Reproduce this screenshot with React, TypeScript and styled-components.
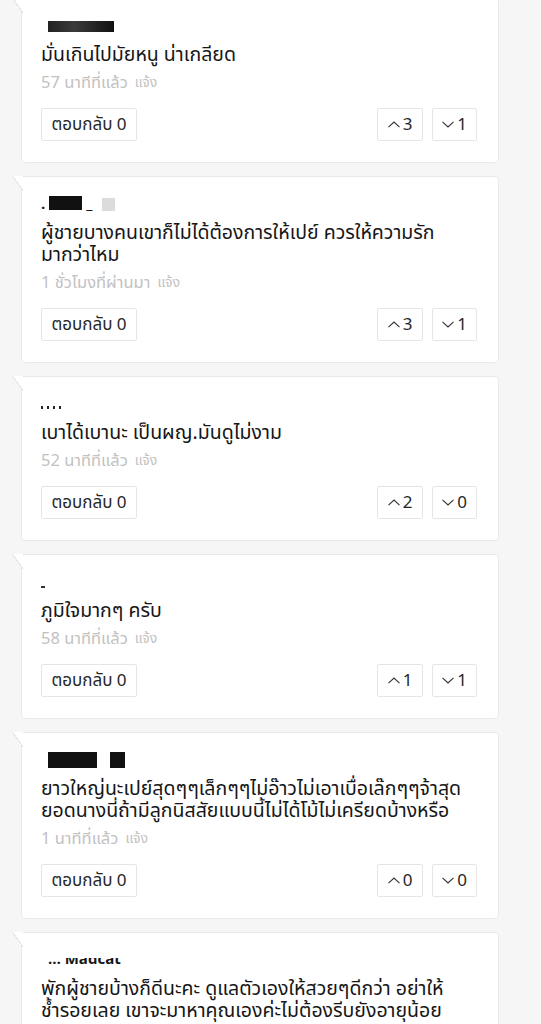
import styled, { createGlobalStyle } from 'styled-components'

const GlobalStyle = createGlobalStyle`
  body {
    margin: 0;
    background: #f6f6f6;
    font-family: "Noto Sans Thai", "Noto Sans", "Liberation Sans", sans-serif;
    color: #161616;
  }
`

const List = styled.main`
  width: 478px;
  padding: 0 0 40px 21px;
  margin-top: -2px;
  display: flex;
  flex-direction: column;
  gap: 13px;
`

const Card = styled.section`
  position: relative;
  background: #fff;
  border: 1px solid #e9e9e9;
  border-radius: 4px;
  padding: 17px 21px 21px 19px;

  /* little speech tail at the top left corner */
  &::before {
    content: '';
    position: absolute;
    top: -1px;
    left: -10px;
    width: 11px;
    height: 15px;
    background: linear-gradient(to top right, transparent 48%, #e4e4e4 49%, #e4e4e4 54%, #fff 55%);
  }
`

const NameRow = styled.div`
  height: 20px;
  display: flex;
  align-items: center;
  gap: 4px;
  font-size: 15px;
  font-weight: 700;
`

const Redact = styled.span<{ w: number; h: number; tone?: string; dy?: number }>`
  display: inline-block;
  width: ${p => p.w}px;
  height: ${p => p.h}px;
  background: ${p => p.tone ?? '#111'};
  margin-top: ${p => p.dy ?? 0}px;
`

const Clipped = styled.div`
  height: 8px;
  overflow: hidden;
  display: flex;
  align-items: flex-end;
  margin-top: 4px;
  margin-left: 7px;
  span {
    line-height: 16px;
    display: block;
    margin-bottom: -2px;
  }
`

const Body = styled.div`
  margin-top: 8px;
  font-size: 19.5px;
  line-height: 22px;
  div {
    white-space: nowrap;
  }
`

const Meta = styled.div`
  margin-top: 6px;
  height: 20px;
  display: flex;
  align-items: center;
  gap: 7px;
  color: #c2c2c2;
  font-size: 16.5px;
  small {
    font-size: 14px;
  }
`

const Actions = styled.div`
  margin-top: 16px;
  display: flex;
  align-items: center;
  gap: 9px;
`

const Btn = styled.button<{ w: number }>`
  height: 33px;
  width: ${p => p.w}px;
  border: 1px solid #e6e6e6;
  border-radius: 2px;
  background: #fff;
  color: #262626;
  font-family: inherit;
  font-size: 17px;
  display: inline-flex;
  align-items: center;
  justify-content: center;
  gap: 3px;
  padding: 0;
`

const Spacer = styled.div`
  flex: 1;
`

const Chevron = ({ up }: { up?: boolean }) => (
  <svg width="12" height="7" viewBox="0 0 12 7" fill="none" stroke="#333" strokeWidth="1.1">
    <path d={up ? 'M0.5 6.2 L6 1 L11.5 6.2' : 'M0.5 0.8 L6 6 L11.5 0.8'} />
  </svg>
)

type Item = {
  name: React.ReactNode
  lines: string[]
  time: string
  up: number
  down: number
}

const items: Item[] = [
  {
    name: (
      <>
        <Redact w={66} h={11} tone="linear-gradient(90deg,#222,#3a3a3a 40%,#111)" style={{ marginLeft: 7 }} />
      </>
    ),
    lines: ['มั่นเกินไปมัยหนู น่าเกลียด'],
    time: '57 นาทีที่แล้ว',
    up: 3,
    down: 1,
  },
  {
    name: (
      <>
        <span>.</span>
        <Redact w={33} h={14} dy={-2} />
        <span>_</span>
        <Redact w={13} h={13} tone="#dcdcdc" style={{ marginLeft: 6 }} />
      </>
    ),
    lines: ['ผู้ชายบางคนเขาก็ไม่ได้ต้องการให้เปย์ ควรให้ความรัก', 'มากว่าไหม'],
    time: '1 ชั่วโมงที่ผ่านมา',
    up: 3,
    down: 1,
  },
  {
    name: <Redact w={20} h={3} dy={6} tone="repeating-linear-gradient(90deg,#222 0 2px,transparent 2px 6px)" />,
    lines: ['เบาได้เบานะ เป็นผญ.มันดูไม่งาม'],
    time: '52 นาทีที่แล้ว',
    up: 2,
    down: 0,
  },
  {
    name: <Redact w={4} h={2} dy={10} tone="#333" />,
    lines: ['ภูมิใจมากๆ ครับ'],
    time: '58 นาทีที่แล้ว',
    up: 1,
    down: 1,
  },
  {
    name: (
      <>
        <Redact w={49} h={16} style={{ marginLeft: 7 }} />
        <Redact w={15} h={16} style={{ marginLeft: 9 }} />
      </>
    ),
    lines: [
      'ยาวใหญ่นะเปย์สุดๆๆเล็กๆๆไม่อ๊าวไม่เอาเบื่อเล๊กๆๆจ้าสุด',
      'ยอดนางนี่ถ้ามีลูกนิสสัยแบบนี้ไม่ได้โม้ไม่เครียดบ้างหรือ',
    ],
    time: '1 นาทีที่แล้ว',
    up: 0,
    down: 0,
  },
  {
    name: (
      <Clipped>
        <span>… Madcat</span>
      </Clipped>
    ),
    lines: [
      'พักผู้ชายบ้างก็ดีนะคะ ดูแลตัวเองให้สวยๆดีกว่า อย่าให้',
      'ช้ำรอยเลย เขาจะมาหาคุณเองค่ะไม่ต้องรีบยังอายุน้อย',
    ],
    time: '2 นาทีที่แล้ว',
    up: 0,
    down: 0,
  },
]

const App = () => {
  return (
    <>
      <GlobalStyle />
      <List>
        {items.map((it, i) => (
          <Card key={i}>
            <NameRow>{it.name}</NameRow>
            <Body>
              {it.lines.map((l, j) => (
                <div key={j}>{l}</div>
              ))}
            </Body>
            <Meta>
              <span>{it.time}</span>
              <small>แจ้ง</small>
            </Meta>
            <Actions>
              <Btn w={96}>ตอบกลับ 0</Btn>
              <Spacer />
              <Btn w={46}>
                <Chevron up />
                {it.up}
              </Btn>
              <Btn w={45}>
                <Chevron />
                {it.down}
              </Btn>
            </Actions>
          </Card>
        ))}
      </List>
    </>
  )
}

export default App
